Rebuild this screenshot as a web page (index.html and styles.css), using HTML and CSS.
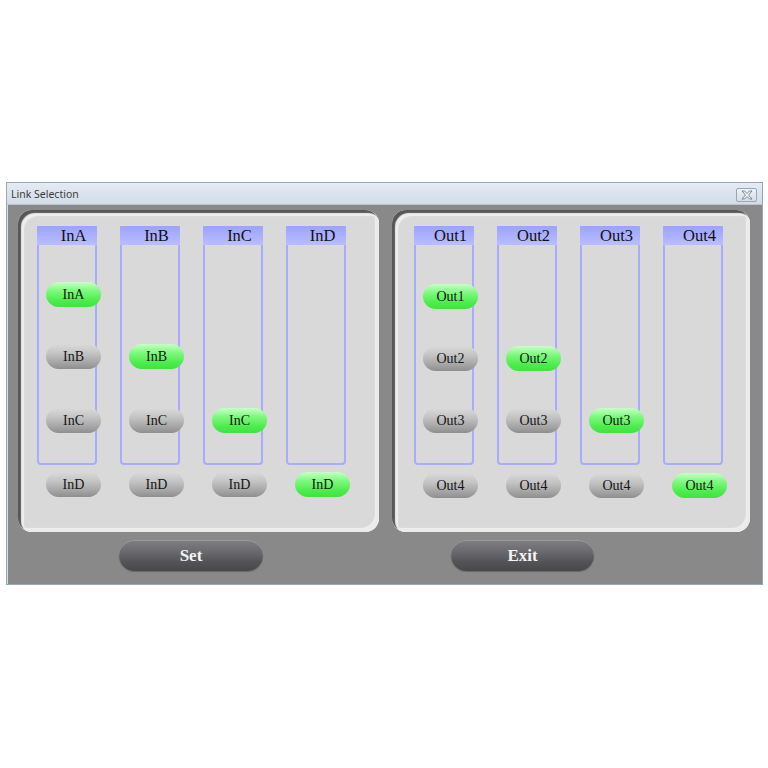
FILE: index.html
```html
<!DOCTYPE html>
<html>
<head>
<meta charset="utf-8">
<link rel="stylesheet" href="styles.css">
</head>
<body>
<div class="win">
  <div class="titlebar">
    <span class="title">Link Selection</span>
    <span class="close"><svg width="14" height="10" viewBox="0 0 14 10"><path d="M2 1 L4.5 1 L7 3.5 L9.5 1 L12 1 L8.5 5 L12 9 L9.5 9 L7 6.5 L4.5 9 L2 9 L5.5 5 Z" fill="#f4f6f8" stroke="#6d7a8a" stroke-width="0.9" stroke-linejoin="round"/></svg></span>
  </div>
  <div class="content">
    <div class="panels">
      <div class="panel panel-left">
        <div class="cols">
          <div class="col">
            <div class="box"><div class="hdr">InA</div>
              <div class="pill on r1">InA</div>
              <div class="pill r2">InB</div>
              <div class="pill r3">InC</div>
            </div>
            <div class="pill r4">InD</div>
          </div>
          <div class="col">
            <div class="box"><div class="hdr">InB</div>
              <div class="pill ghost r1"></div>
              <div class="pill on r2">InB</div>
              <div class="pill r3">InC</div>
            </div>
            <div class="pill r4">InD</div>
          </div>
          <div class="col">
            <div class="box"><div class="hdr">InC</div>
              <div class="pill ghost r1"></div>
              <div class="pill ghost r2"></div>
              <div class="pill on r3">InC</div>
            </div>
            <div class="pill r4">InD</div>
          </div>
          <div class="col">
            <div class="box"><div class="hdr">InD</div></div>
            <div class="pill on r4">InD</div>
          </div>
        </div>
      </div>
      <div class="panel panel-right">
        <div class="cols">
          <div class="col">
            <div class="box"><div class="hdr">Out1</div>
              <div class="pill on r1">Out1</div>
              <div class="pill r2">Out2</div>
              <div class="pill r3">Out3</div>
            </div>
            <div class="pill r4">Out4</div>
          </div>
          <div class="col">
            <div class="box"><div class="hdr">Out2</div>
              <div class="pill ghost r1"></div>
              <div class="pill on r2">Out2</div>
              <div class="pill r3">Out3</div>
            </div>
            <div class="pill r4">Out4</div>
          </div>
          <div class="col">
            <div class="box"><div class="hdr">Out3</div>
              <div class="pill ghost r1"></div>
              <div class="pill ghost r2"></div>
              <div class="pill on r3">Out3</div>
            </div>
            <div class="pill r4">Out4</div>
          </div>
          <div class="col">
            <div class="box"><div class="hdr">Out4</div></div>
            <div class="pill on r4">Out4</div>
          </div>
        </div>
      </div>
    </div>
    <div class="buttons">
      <div class="btn">Set</div>
      <div class="btn btn-exit">Exit</div>
    </div>
  </div>
</div>
</body>
</html>
```
FILE: styles.css
```css
html, body {
  margin: 0;
  padding: 0;
  background: #ffffff;
}
.win {
  margin: 182px 0 0 6px;
  width: 757px;
  height: 403px;
  box-sizing: border-box;
  border: 1px solid #9aa6b4;
  background: #d3dde8;
}
.titlebar {
  height: 21px;
  display: flex;
  align-items: center;
  justify-content: space-between;
  padding: 0 5px 0 4px;
  background: linear-gradient(#e4ebf3, #d2dce8);
  border-bottom: 1px solid #b9c4d0;
}
.title {
  font-family: "Noto Sans", "DejaVu Sans", sans-serif;
  font-size: 10.5px;
  color: #3c3c3c;
}
.close {
  width: 21px;
  height: 14px;
  box-sizing: border-box;
  border: 1px solid #98a6b6;
  border-radius: 2px;
  background: linear-gradient(#eef2f6, #d4dde7);
  display: flex;
  align-items: center;
  justify-content: center;
  margin-top: 2px;
}
.content {
  height: 379px;
  margin: 0 0 0 1px;
  background: #898989;
  padding: 5px 12px 0 10px;
  box-sizing: border-box;
}
.panels {
  display: flex;
  gap: 13px;
}
.panel {
  height: 322px;
  border-radius: 14px;
  background: #d9d9d9;
  box-sizing: border-box;
  box-shadow: inset 3px 3px 1px #575757, inset 6px 6px 1px #eeeeee, inset -3px -3px 0 #ebebeb, inset -4px -4px 1px #f0f0f0;
}
.panel-left { width: 361px; }
.panel-right { width: 358px; }
.cols {
  display: flex;
  gap: 23px;
  padding: 16px 0 0 19px;
}
.panel-right .cols {
  padding-left: 22px;
}
.col {
  width: 60px;
  display: flex;
  flex-direction: column;
}
.box {
  height: 239px;
  box-sizing: border-box;
  border: 2px solid #a7adfc;
  border-top: none;
  border-radius: 0 0 4px 4px;
  display: flex;
  flex-direction: column;
}
.hdr {
  height: 19px;
  margin: 0 -2px;
  border-radius: 3px 3px 0 0;
  background: linear-gradient(#9ca2fe, #b9bdff);
  font-family: "Liberation Serif", "Times New Roman", serif;
  font-size: 16.5px;
  line-height: 20px;
  color: #111;
  text-align: center;
  padding-left: 13px;
}
.pill {
  width: 55px;
  height: 25px;
  border-radius: 12.5px;
  margin-left: 7px;
  font-family: "Liberation Serif", "Times New Roman", serif;
  font-size: 14px;
  line-height: 25px;
  text-align: center;
  color: #151515;
  background: linear-gradient(#dadada 0%, #c2c2c2 40%, #9c9c9c 85%, #8e8e8e 100%);
  flex: none;
}
.pill.on {
  background: linear-gradient(#c8ffc8 0%, #7ef97e 35%, #4cec4c 75%, #3fe43f 100%);
}
.pill.ghost {
  visibility: hidden;
}
.r1 { margin-top: 37px; }
.r2 { margin-top: 37px; }
.r3 { margin-top: 39px; }
.panel-right .r1 { margin-top: 39px; }
.panel-right .r3 { margin-top: 37px; }
.col > .r4 { margin-top: 7px; margin-left: 9px; }
.panel-right .col > .r4 { margin-top: 8px; }
.buttons {
  display: flex;
  gap: 188px;
  padding: 8px 0 0 101px;
}
.btn {
  width: 144px;
  height: 31px;
  border-radius: 15.5px;
  background: linear-gradient(#7f7f83 0%, #6c6c70 35%, #545458 70%, #47474a 100%);
  box-shadow: inset 0 1px 0 #9a9a9e, 0 1px 1px #6a6a6a;
  font-family: "Liberation Serif", "Times New Roman", serif;
  font-weight: bold;
  font-size: 17px;
  line-height: 31px;
  color: #f2f2f2;
  text-align: center;
}
.btn-exit { width: 143px; }
```
